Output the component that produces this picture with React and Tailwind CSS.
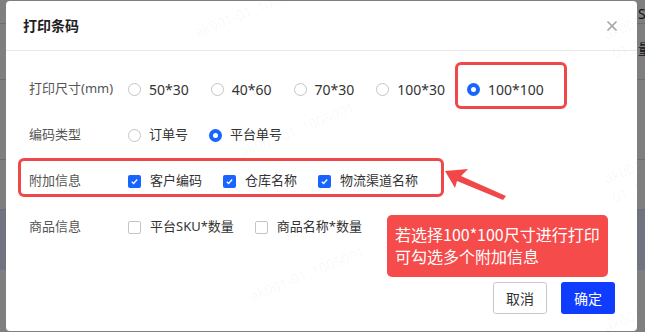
import { X } from 'lucide-react';

const font = { fontFamily: '"Noto Sans", "Noto Sans CJK SC", sans-serif' };
const cjk = { fontFamily: '"Noto Sans CJK SC", "Noto Sans", sans-serif' };

function Radio({ checked, label, big }) {
  return (
    <label className="flex items-center">
      {checked ? (
        <span className="flex h-[13px] w-[13px] items-center justify-center rounded-full bg-[#1764ff]">
          <span className="h-[5px] w-[5px] rounded-full bg-white" />
        </span>
      ) : (
        <span className="h-[13px] w-[13px] rounded-full border border-[#c4c4c4] bg-white" />
      )}
      <span className={`ml-[8px] text-[#333] ${big ? 'text-[14px]' : 'text-[13px]'}`}>{label}</span>
    </label>
  );
}

function Check({ checked, label }) {
  return (
    <label className="flex items-center">
      {checked ? (
        <span className="flex h-[13px] w-[13px] items-center justify-center rounded-[2px] bg-[#1764ff]">
          <svg width="9" height="9" viewBox="0 0 10 10" fill="none" stroke="white" strokeWidth="1.4">
            <path d="M2 5.2l2 2 4-4.4" />
          </svg>
        </span>
      ) : (
        <span className="h-[13px] w-[13px] rounded-[2px] border border-[#c4c4c4] bg-white" />
      )}
      <span className="ml-[9px] text-[13px] text-[#333]">{label}</span>
    </label>
  );
}

function Row({ label, children, gap = 'gap-[21px]' }) {
  return (
    <div className="flex h-[46px] items-center">
      <div className="w-[99px] text-[13px] text-[#555]">{label}</div>
      <div className={`flex items-center ${gap}`}>{children}</div>
    </div>
  );
}

function Watermark({ className }) {
  return (
    <div className={`pointer-events-none absolute -rotate-[22deg] text-[14px] text-black/[0.04] ${className}`}>
      ak001-01_1005001
    </div>
  );
}

export default function App() {
  return (
    <div style={font} className="relative h-[332px] w-[645px] overflow-hidden bg-[#7f7f7f]">
      {/* page behind the overlay */}
      <div className="absolute left-0 top-0 h-full w-full">
        <div className="h-[24px] border-b border-[#6e6e6e]" />
        <div className="h-[56px] border-b border-[#6e6e6e]" />
        <div className="h-[80px] border-b border-[#6e6e6e]" />
        <div className="h-[50px] border-b border-[#6e6e6e]" />
        <div className="h-[60px] bg-[#707480]" />
      </div>
      <div className="absolute left-[638px] top-[3px] text-[14px] text-[#111]">S</div>
      <div className="absolute left-[638px] top-[38px] text-[14px] text-[#111]">量</div>

      <div className="absolute left-[6px] top-[1px] flex h-[330px] w-[631px] flex-col overflow-hidden rounded-[4px] bg-white">
        <div className="flex h-[50px] shrink-0 items-center justify-between border-b border-[#e8e8e8] pl-[17px] pr-[17px]">
          <div className="text-[14px] font-bold text-[#222]">打印条码</div>
          <X size={16} strokeWidth={2.6} className="text-[#a6a6a6]" />
        </div>

        <div className="pl-[23px] pt-[15px]">
          <Row label="打印尺寸(mm)" gap="gap-[22px]">
            <Radio big label="50*30" />
            <Radio big label="40*60" />
            <Radio big label="70*30" />
            <Radio big label="100*30" />
            <Radio big checked label="100*100" />
          </Row>
          <Row label="编码类型">
            <Radio label="订单号" />
            <Radio checked label="平台单号" />
          </Row>
          <Row label="附加信息">
            <Check checked label="客户编码" />
            <Check checked label="仓库名称" />
            <Check checked label="物流渠道名称" />
          </Row>
          <Row label="商品信息">
            <Check label="平台SKU*数量" />
            <Check label="商品名称*数量" />
          </Row>
        </div>

        <div className="mt-auto flex justify-end gap-[14px] pb-[17px] pr-[22px]">
          <button className="h-[32px] w-[54px] rounded-[3px] border border-[#c9c9c9] bg-white text-[14px] text-[#333]">取消</button>
          <button className="h-[32px] w-[54px] rounded-[3px] bg-[#0f3cff] text-[14px] text-white">确定</button>
        </div>

        <Watermark className="left-[185px] top-[-2px]" />
        <Watermark className="left-[230px] top-[118px]" />
        <Watermark className="left-[240px] top-[262px]" />
        <Watermark className="left-[600px] top-[8px]" />
        <Watermark className="left-[600px] top-[152px]" />
        <Watermark className="left-[600px] top-[300px]" />
      </div>

      {/* annotations */}
      <div className="absolute left-[455px] top-[62px] h-[47px] w-[112px] rounded-[6px] border-[3px] border-[#f04848]" />
      <div className="absolute left-[18px] top-[158px] h-[39px] w-[426px] rounded-[6px] border-[3px] border-[#f04848]" />
      <svg className="absolute left-0 top-0" width="645" height="332">
        <polygon points="445,171 468,169 461,176 506,196 503,200 457,181 455,188" fill="#f04848" />
      </svg>
      <div
        style={cjk}
        className="absolute left-[387px] top-[215px] h-[62px] w-[221px] whitespace-nowrap rounded-[5px] bg-[#f54b4a] px-[8px] pt-[8px] text-[16px] leading-[22px] text-white"
      >
        <div>若选择100*100尺寸进行打印</div>
        <div>可勾选多个附加信息</div>
      </div>
    </div>
  );
}
